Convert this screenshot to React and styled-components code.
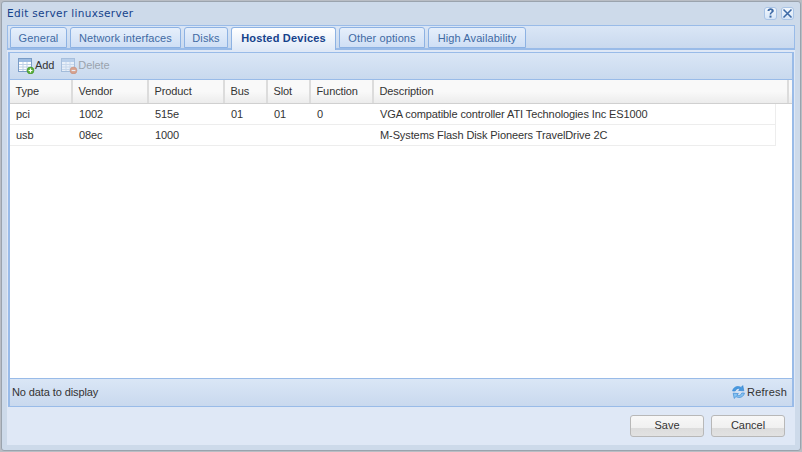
import React from 'react';
import styled, { createGlobalStyle } from 'styled-components';

const GlobalStyle = createGlobalStyle`
    html, body {
        margin: 0;
        padding: 0;
        width: 802px;
        height: 452px;
        overflow: hidden;
        background: #b9bdc4;
    }
    * {
        box-sizing: border-box;
    }
`;

const columns = [
    { key: 'type', label: 'Type', width: 63 },
    { key: 'vendor', label: 'Vendor', width: 76 },
    { key: 'product', label: 'Product', width: 76 },
    { key: 'bus', label: 'Bus', width: 43 },
    { key: 'slot', label: 'Slot', width: 43 },
    { key: 'fn', label: 'Function', width: 63 },
    { key: 'description', label: 'Description', width: 402 },
];

const rows = [
    {
        type: 'pci',
        vendor: '1002',
        product: '515e',
        bus: '01',
        slot: '01',
        fn: '0',
        description: 'VGA compatible controller ATI Technologies Inc ES1000',
    },
    {
        type: 'usb',
        vendor: '08ec',
        product: '1000',
        bus: '',
        slot: '',
        fn: '',
        description: 'M-Systems Flash Disk Pioneers TravelDrive 2C',
    },
];

const tabs = [
    { label: 'General', width: 57 },
    { label: 'Network interfaces', width: 111 },
    { label: 'Disks', width: 44 },
    { label: 'Hosted Devices', width: 105, active: true },
    { label: 'Other options', width: 86 },
    { label: 'High Availability', width: 98 },
];

const TableIcon = ({ badge, faded }) => (
    <svg width="17" height="18" viewBox="0 -2 17 18" style={{ opacity: faded ? 0.5 : 1 }}>
        <rect x="0.5" y="0.5" width="13" height="13" fill="#fff" stroke="#7a9cc6" />
        <rect x="1" y="1" width="12" height="3" fill="#9dbce2" />
        <path d="M1 6.5h12M1 9h12M1 11.5h12M5 4v9M9 4v9" stroke="#bfd1e7" strokeWidth="1" fill="none" />
        {badge === 'add' ? (
            <>
                <circle cx="12.5" cy="12.5" r="3.4" fill="#5cb23a" stroke="#3a8a26" strokeWidth="0.6" />
                <path d="M10.6 12.5h3.8M12.5 10.6v3.8" stroke="#fff" strokeWidth="1.2" />
            </>
        ) : (
            <>
                <circle cx="12.5" cy="12.5" r="3.4" fill="#e2662c" stroke="#b84a17" strokeWidth="0.6" />
                <path d="M10.6 12.5h3.8" stroke="#fff" strokeWidth="1.2" />
            </>
        )}
    </svg>
);

const RefreshIcon = () => (
    <svg width="15" height="16" viewBox="0 0 15 16">
        <path d="M1.6 7C2 3.4 6.4 1.2 10 3.4L11.8 1.6 12.8 6.8 7.6 6.4 9.2 4.8C7 3.8 5 4.6 4.2 7Z" fill="#4b9be0" stroke="#2b7fd0" strokeWidth="0.6" strokeLinejoin="round" />
        <path d="M13.4 9C13 12.6 8.6 14.8 5 12.6L3.2 14.4 2.2 9.2 7.4 9.6 5.8 11.2C8 12.2 10 11.4 10.8 9Z" fill="#86c3f2" stroke="#2b7fd0" strokeWidth="0.6" strokeLinejoin="round" />
    </svg>
);

export default function App() {
    return (
        <>
            <GlobalStyle />
            <Window>
                <TitleBar>
                    <Title>Edit server linuxserver</Title>
                    <Tools>
                        <Tool>
                            <svg width="11" height="12" viewBox="0 0 11 12">
                                <path d="M2.5 4C2.5 2 4 1.2 5.6 1.2 7.4 1.2 8.8 2.2 8.8 3.8 8.8 5.8 6.2 5.8 6.2 7.6H4.6C4.6 5.2 6.6 5.2 6.6 3.9 6.6 3.2 6.2 2.9 5.5 2.9 4.8 2.9 4.5 3.4 4.5 4Z" fill="#3e6aa6" />
                                <rect x="4.5" y="8.6" width="2" height="2" fill="#3e6aa6" />
                            </svg>
                        </Tool>
                        <Tool>
                            <svg width="11" height="11" viewBox="0 0 11 11">
                                <path d="M1.5 1.5l8 8M9.5 1.5l-8 8" stroke="#3e6aa6" strokeWidth="1.6" />
                            </svg>
                        </Tool>
                    </Tools>
                </TitleBar>
                <Body>
                    <TabStrip>
                        {tabs.map((tab) => (
                            <Tab key={tab.label} $active={tab.active} $width={tab.width}>
                                {tab.label}
                            </Tab>
                        ))}
                    </TabStrip>
                    <Panel>
                        <Toolbar>
                            <ToolButton>
                                <TableIcon badge="add" />
                                Add
                            </ToolButton>
                            <ToolButton $disabled>
                                <TableIcon badge="remove" faded />
                                Delete
                            </ToolButton>
                        </Toolbar>
                        <HeaderRow>
                            {columns.map((col, i) => (
                                <HeaderCell key={col.key} $width={i === 6 ? 415 : col.width}>
                                    {col.label}
                                </HeaderCell>
                            ))}
                        </HeaderRow>
                        <Rows>
                            {rows.map((row) => (
                                <Row key={row.type}>
                                    {columns.map((col) => (
                                        <Cell key={col.key} $width={col.width}>
                                            {row[col.key]}
                                        </Cell>
                                    ))}
                                </Row>
                            ))}
                        </Rows>
                        <PagingBar>
                            <span>No data to display</span>
                            <RefreshButton>
                                <RefreshIcon />
                                Refresh
                            </RefreshButton>
                        </PagingBar>
                    </Panel>
                    <Footer>
                        <FooterButton>Save</FooterButton>
                        <FooterButton>Cancel</FooterButton>
                    </Footer>
                </Body>
            </Window>
        </>
    );
}

const Window = styled.div`
    width: 800px;
    height: 450px;
    margin: 1px 0 0 1px;
    padding: 0 5px 5px 5px;
    display: flex;
    flex-direction: column;
    background: #cddaea;
    border: 1px solid #9aa3ad;
    border-radius: 3px;
    font-family: 'Liberation Sans', Arial, sans-serif;
    font-size: 11px;
    letter-spacing: -0.1px;
    color: #333;
`;

const TitleBar = styled.div`
    height: 23px;
    flex: none;
    display: flex;
    align-items: center;
    justify-content: space-between;
    padding: 0 1px 2px 0;
`;

const Title = styled.span`
    color: #15428b;
    letter-spacing: 0.33px;
    font-family: 'DejaVu Sans', sans-serif;
    font-size: 10.5px;
`;

const Tools = styled.div`
    display: flex;
    gap: 4px;
    margin-top: 1px;
`;

const Tool = styled.div`
    width: 13px;
    height: 13px;
    display: flex;
    align-items: center;
    justify-content: center;
    background: linear-gradient(#f2f7fd, #d6e5f7);
    border: 1px solid #a9c4e6;
    border-radius: 3px;
`;

const Body = styled.div`
    flex: 1;
    display: flex;
    flex-direction: column;
    background: #dfe8f6;
    min-height: 0;
`;

const TabStrip = styled.div`
    height: 25px;
    flex: none;
    display: flex;
    align-items: flex-end;
    gap: 3px;
    padding: 1px 0 0 2px;
    background: linear-gradient(#dae6f6, #c9d9ee);
    border: 1px solid #99bbe8;
    border-bottom-width: 2px;
`;

const Tab = styled.div`
    width: ${(p) => p.$width}px;
    height: ${(p) => (p.$active ? '23px' : '21px')};
    margin-bottom: ${(p) => (p.$active ? '-2px' : '0')};
    padding-top: 3px;
    text-align: center;
    line-height: 14px;
    letter-spacing: ${(p) => (p.$active ? '0.2px' : '0.1px')};
    font-weight: ${(p) => (p.$active ? 'bold' : 'normal')};
    color: ${(p) => (p.$active ? '#15428b' : '#416aa3')};
    background: ${(p) => (p.$active ? 'linear-gradient(#fff, #dfe9f7)' : 'linear-gradient(#e6effb, #cfdff5)')};
    border: 1px solid #8db2e3;
    border-bottom: ${(p) => (p.$active ? 'none' : '1px solid #8db2e3')};
    border-radius: 3px 3px 0 0;
`;

const Panel = styled.div`
    flex: none;
    height: 355px;
    margin: 2px 1px 0 1px;
    display: flex;
    flex-direction: column;
    background: #fff;
    border: 1px solid #99bbe8;
    border-width: 1px 2px 1px 2px;
`;

const Toolbar = styled.div`
    height: 27px;
    flex: none;
    display: flex;
    align-items: center;
    gap: 7px;
    padding: 0 0 2px 8px;
    background: linear-gradient(#dae6f6, #c9d9ee);
    border-bottom: 1px solid #99bbe8;
`;

const ToolButton = styled.div`
    display: flex;
    align-items: center;
    color: ${(p) => (p.$disabled ? '#9aa3ad' : '#333')};
`;

const HeaderRow = styled.div`
    height: 24px;
    flex: none;
    display: flex;
    background: linear-gradient(#f9f9f9 50%, #ececec);
    border-bottom: 1px solid #d0d0d0;
`;

const HeaderCell = styled.div`
    width: ${(p) => p.$width}px;
    flex: none;
    padding: 5px 0 0 5.5px;
    line-height: 13px;
    border-right: 2px solid #dcdcdc;
`;

const Rows = styled.div`
    flex: 1;
    background: #fff;
`;

const Row = styled.div`
    width: 766px;
    height: 21px;
    display: flex;
    border: 1px solid #ededed;
    border-width: 0 1px 1px 0;
`;

const Cell = styled.div`
    width: ${(p) => p.$width}px;
    flex: none;
    padding: 3px 0 0 6px;
    line-height: 14px;
    white-space: nowrap;
    overflow: hidden;
`;

const PagingBar = styled.div`
    height: 28px;
    flex: none;
    display: flex;
    align-items: center;
    justify-content: space-between;
    padding: 0 5px 2px 2px;
    background: linear-gradient(#dae6f6, #c9d9ee);
    border-top: 1px solid #99bbe8;
`;

const RefreshButton = styled.div`
    display: flex;
    align-items: center;
    gap: 1px;
    letter-spacing: 0.2px;
`;

const Footer = styled.div`
    flex: 1;
    display: flex;
    align-items: flex-start;
    justify-content: flex-end;
    gap: 7px;
    padding: 8px 10px 0 0;
`;

const FooterButton = styled.button`
    width: 74px;
    height: 22px;
    padding: 0 0 2px;
    font: 11px 'Liberation Sans', Arial, sans-serif;
    color: #333;
    background: linear-gradient(#f8f8f8 0, #f0f0f0 60%, #dcdcdc 60%, #e2e2e2);
    border: 1px solid #b8b8b8;
    border-radius: 3px;
`;
